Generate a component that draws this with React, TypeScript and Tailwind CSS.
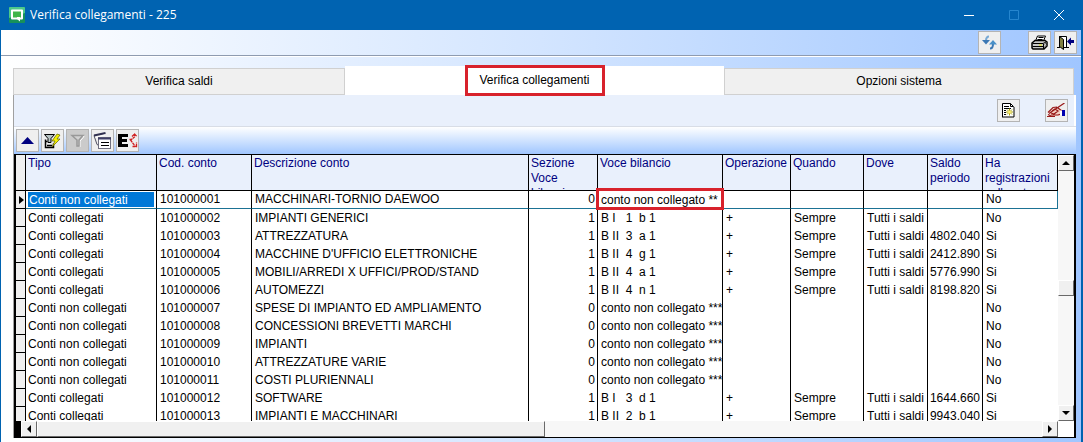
import type React from "react"

type Row = [string, string, string, number, string, string, string, string, string, string]

const LINKED = "Conti collegati"
const UNLINKED = "Conti non collegati"
const MISSING = "conto non collegato ***"

const rows: Row[] = [
  [UNLINKED, "101000001", "MACCHINARI-TORNIO DAEWOO", 0, "conto non collegato **", "", "", "", "", "No"],
  [LINKED, "101000002", "IMPIANTI GENERICI", 1, "B I   1  b 1", "+", "Sempre", "Tutti i saldi", "", "No"],
  [LINKED, "101000003", "ATTREZZATURA", 1, "B II  3  a 1", "+", "Sempre", "Tutti i saldi", "4802.040", "Si"],
  [LINKED, "101000004", "MACCHINE D'UFFICIO ELETTRONICHE", 1, "B II  4  g 1", "+", "Sempre", "Tutti i saldi", "2412.890", "Si"],
  [LINKED, "101000005", "MOBILI/ARREDI X UFFICI/PROD/STAND", 1, "B II  4  a 1", "+", "Sempre", "Tutti i saldi", "5776.990", "Si"],
  [LINKED, "101000006", "AUTOMEZZI", 1, "B II  4  n 1", "+", "Sempre", "Tutti i saldi", "8198.820", "Si"],
  [UNLINKED, "101000007", "SPESE DI IMPIANTO ED AMPLIAMENTO", 0, MISSING, "", "", "", "", "No"],
  [UNLINKED, "101000008", "CONCESSIONI BREVETTI MARCHI", 0, MISSING, "", "", "", "", "No"],
  [UNLINKED, "101000009", "IMPIANTI", 0, MISSING, "", "", "", "", "No"],
  [UNLINKED, "101000010", "ATTREZZATURE VARIE", 0, MISSING, "", "", "", "", "No"],
  [UNLINKED, "101000011", "COSTI PLURIENNALI", 0, MISSING, "", "", "", "", "No"],
  [LINKED, "101000012", "SOFTWARE", 1, "B I   3  d 1", "+", "Sempre", "Tutti i saldi", "1644.660", "Si"],
  [LINKED, "101000013", "IMPIANTI E MACCHINARI", 1, "B II  2  b 1", "+", "Sempre", "Tutti i saldi", "9943.040", "Si"],
]

const columns = [
  { label: "Tipo", width: "w-[131px]" },
  { label: "Cod. conto", width: "w-[95px]" },
  { label: "Descrizione conto", width: "" },
  { label: "Sezione Voce bilancio", width: "w-[69px]" },
  { label: "Voce bilancio", width: "w-[125px]" },
  { label: "Operazione", width: "w-[68px]" },
  { label: "Quando", width: "w-[73px]" },
  { label: "Dove", width: "w-[64px]" },
  { label: "Saldo periodo", width: "w-[55px]" },
  { label: "Ha registrazioni collegate", width: "w-[75px]" },
]

const ToolButton = ({
  label,
  className = "bg-[#efefef]",
  children,
}: { label: string; className?: string; children: React.ReactNode }) => (
  <button
    type="button"
    aria-label={label}
    className={`flex h-[23px] w-[23px] shrink-0 items-center justify-center border border-[#b4b4b4] ${className}`}
  >
    {children}
  </button>
)

const ScrollButton = ({ label, points }: { label: string; points: string }) => (
  <button
    type="button"
    aria-label={label}
    className="flex h-4 w-4 shrink-0 items-center justify-center border border-t-white border-l-white border-r-[#696969] border-b-[#696969] bg-[#f0f0f0]"
  >
    <svg width="8" height="8" viewBox="0 0 8 8">
      <polygon points={points} />
    </svg>
  </button>
)

const AppLogo = () => (
  <svg width="16" height="16" viewBox="0 0 16 16">
    <rect width="16" height="16" rx="1" fill="#17915a" />
    <path d="M0 1q0-1 1-1h14q1 0 1 1v5L0 11z" fill="#4cc98a" />
    <path d="M3 3.500h10v8H3z" fill="#3fb54a" stroke="#fff" strokeWidth="2" strokeLinejoin="round" />
    <path d="M8 10h3v4.500L8 12z" fill="#fff" />
  </svg>
)

const RefreshIcon = () => (
  <svg width="15" height="15" viewBox="0 0 15 15" fill="none" stroke="#4a86bd" strokeWidth="2">
    <path d="M7 1.500C4.500 1.500 4 3 4 6" stroke="#79a9d4" />
    <path d="M0 5h8L4 9.500z" fill="#3c78b4" stroke="none" />
    <path d="M8 13.500c2.500 0 3-1.500 3-4.500" stroke="#3c78b4" />
    <path d="M7 9.500h8L11 5z" fill="#4a90c8" stroke="none" />
  </svg>
)

const PrinterIcon = () => (
  <svg width="17" height="15" viewBox="0 0 17 15" stroke="#000">
    <path d="M4.500 6l2-5h8l-2 5z" fill="#fff" />
    <path d="M7.500 2.500h5M6.500 4.500h5" />
    <path d="M1 8l3-2.500h10l2 1.500v4l-3 3H2l-1-1z" fill="#c8c8c8" strokeWidth="1.500" />
    <path d="M1.500 8.500H12l4-2M12.500 9v5M1.500 11.500H12" fill="none" />
    <path d="M8 10h3" stroke="#e8e800" />
    <path d="M13.500 9.500l2-2M13.500 12l2-2" stroke="#707070" />
  </svg>
)

const ExitIcon = () => (
  <svg width="17" height="16" viewBox="0 0 17 16">
    <path d="M2.500 13V1.500h7V13" fill="#fff" stroke="#000" />
    <path d="M0 12.500h3M7 12.500h5" stroke="#000" />
    <path d="M2.500 1.500l4 3v10l-4-3z" fill="#808040" stroke="#000" />
    <path d="M10 6.500l4-4V5h3v3h-3v2.500z" fill="#000080" />
  </svg>
)

const ReportIcon = () => (
  <svg width="13" height="15" viewBox="0 0 13 15">
    <path d="M.5.5h8l3 3v10H.5z" fill="#fff" />
    <path d="M.5 14V.5h8l3 3M12 4v10M0 14h12" fill="none" stroke="#000" />
    <path d="M8.500.5v3h3M2 3.500h5M2 5.500h7M2 7.500h2M2 9.500h2M2 11.500h2" fill="none" stroke="#000" />
    <path d="M7.500 5.500v7M4 9h7M5 6.500l5 5M10 6.500l-5 5" stroke="#a8a000" />
    <circle cx="7.500" cy="9" r="1.500" fill="#fff070" />
  </svg>
)

const SignIcon = () => (
  <svg width="19" height="15" viewBox="0 0 19 15">
    <path d="M3 9l4-4 3-1 5 4v4l-4 1H5L2 11z" fill="#f3cfc2" />
    <path
      d="M17.500 0L10 5 2 10.500M10 4L6 4.500 1 9.500M5 8l3-2 3 2-4 3-3-1M11 5l4 3M4 12h7l3-1M0 13.500h8M1 11.500l3 1.500"
      fill="none"
      stroke="#981818"
      strokeWidth="1.200"
    />
    <path d="M13 7.500h2v5h-2z" fill="#fff" />
    <path d="M15 7h3v6h-3z" fill="#0000b0" />
  </svg>
)

const FilterRunIcon = () => (
  <svg width="17" height="16" viewBox="0 0 17 16">
    <path d="M.5 1.500h10L7 5.500v4H4v-4z" fill="#b8c4c4" stroke="#000" />
    <path d="M1.500 6.500v8h8v-4M1.500 8.500h2M3 12.500h5" fill="none" stroke="#000" strokeWidth="1.500" />
    <path d="M13 1L8 8h3l-3 6 8-8h-3l3-4z" fill="#f4f000" stroke="#606000" strokeWidth=".7" />
  </svg>
)

const FilterIcon = () => (
  <svg width="15" height="15" viewBox="0 0 15 15">
    <path d="M3 3.500h11L10 8v6" fill="none" stroke="#fff" />
    <path d="M2 2.500h11L9 7v6H7V7z" fill="#d2d2d2" stroke="#999" strokeWidth="1.500" />
  </svg>
)

const WindowsIcon = () => (
  <svg width="19" height="17" viewBox="0 0 19 17">
    <path d="M1 3.500l3 9 2 1" fill="none" stroke="#505060" />
    <path d="M1 3.500L12.500 1" stroke="#303050" strokeWidth="2" />
    <path d="M2.500 5.500L12 3" stroke="#fff" />
    <rect x="5.500" y="5.500" width="12" height="11" fill="#fff" stroke="#707080" />
    <path d="M5 6.500h13" stroke="#404068" strokeWidth="2" />
    <path d="M8 10.500h8M8 13.500h8" stroke="#000" />
  </svg>
)

const ExpandIcon = () => (
  <svg width="20" height="15" viewBox="0 0 20 15">
    <path d="M0 1h10v3H4v2h5v3H4v2h6v3H0z" fill="#000" />
    <path
      d="M11.500 6.500h2l3-2.500V1M14 3.500L16.500 1 19 3.500M12.500 7l3 4 2 3M14.500 13.500h4v-4"
      fill="none"
      stroke="#d02020"
      strokeWidth="1.300"
      strokeDasharray="3 .5"
    />
  </svg>
)

export default function App() {
  return (
    <div className="flex flex-col border-l border-r-2 border-[#0063b1] bg-linear-to-r from-white via-[#d3e5ff] via-50% to-[#a0c6ff] font-['Liberation_Sans',Arial,sans-serif] text-xs leading-[15px] text-black">
      <header className="flex h-[30px] items-center bg-[#0063b1] pl-2 text-white">
        <AppLogo />
        <h1 className="ml-[5px] flex-1 font-['Open_Sans',sans-serif] text-xs">Verifica collegamenti - 225</h1>
        <div className="flex">
          <button type="button" aria-label="Riduci a icona" className="flex h-[30px] w-[45px] items-center justify-center">
            <svg width="10" height="10" viewBox="0 0 10 10" stroke="#fff"><path d="M0 5.500h10" /></svg>
          </button>
          <button type="button" aria-label="Ingrandisci" disabled className="flex h-[30px] w-[45px] items-center justify-center">
            <svg width="10" height="10" viewBox="0 0 10 10" fill="none" stroke="#2586cf"><path d="M.5.5h9v9h-9z" /></svg>
          </button>
          <button type="button" aria-label="Chiudi" className="flex h-[30px] w-[45px] items-center justify-center">
            <svg width="10" height="10" viewBox="0 0 10 10" stroke="#fff"><path d="M0 0l10 10M10 0L0 10" /></svg>
          </button>
        </div>
      </header>

      <div className="flex h-[26px] items-center justify-end border-b border-[#8e9bb0] pr-1">
        <ToolButton label="Aggiorna"><RefreshIcon /></ToolButton>
        <div className="w-[27px]" />
        <ToolButton label="Stampa"><PrinterIcon /></ToolButton>
        <div className="w-[3px]" />
        <ToolButton label="Esci"><ExitIcon /></ToolButton>
      </div>

      <main className="border-t border-white pt-[9px] pr-[5px] pb-1 pl-3">
        <div role="tablist" className="flex items-end">
          <button role="tab" aria-selected="false" className="h-[27px] w-[332px] border border-[#d0d0d0] bg-[#f0f0f0]">
            Verifica saldi
          </button>
          <button role="tab" aria-selected="true" className="flex h-[29px] flex-1 items-center justify-center bg-white">
            <span className="flex h-[31px] w-[140px] shrink-0 items-center justify-center border-3 border-[#d8222c]">
              Verifica collegamenti
            </span>
          </button>
          <button role="tab" aria-selected="false" className="mr-[2px] h-[27px] w-[350px] border border-[#d0d0d0] bg-[#f0f0f0]">
            Opzioni sistema
          </button>
        </div>

        <section className="border-l border-[#a0a0a0]">
          <div className="flex h-[31px] items-center justify-end gap-[25px] border-r-2 border-white bg-[#e9f0fc] pr-[6px]">
            <ToolButton label="Report"><ReportIcon /></ToolButton>
            <ToolButton label="Firma"><SignIcon /></ToolButton>
          </div>
          <div className="flex h-7 items-center gap-[2px] border-t border-[#d8dde6] bg-linear-to-b from-white to-[#a0c6ff] pl-[2px]">
            <ToolButton label="Comprimi">
              <svg width="13" height="7" viewBox="0 0 13 7"><path d="M0 7l6.500-7L13 7z" fill="#000080" /></svg>
            </ToolButton>
            <ToolButton label="Applica filtro"><FilterRunIcon /></ToolButton>
            <ToolButton label="Filtro" className="bg-[#cbcbcb]"><FilterIcon /></ToolButton>
            <ToolButton label="Finestre"><WindowsIcon /></ToolButton>
            <ToolButton label="Espandi"><ExpandIcon /></ToolButton>
          </div>

          <div className="border border-x-2 border-black bg-white">
            <div className="flex h-[266px]">
              <div className="min-w-0 flex-1 overflow-hidden">
                <table className="w-full table-fixed border-separate border-spacing-0">
                  <thead>
                    <tr className="text-left text-[#000080]">
                      <th className="w-[10px] border-r border-b border-black bg-[#f0f0f0] p-0" />
                      {columns.map((c) => (
                        <th key={c.label} className={`${c.width} border-r border-b border-black bg-[#e9f0fc] p-0 align-top font-normal`}>
                          <div className="h-[35px] overflow-hidden pt-px pl-[2px]">{c.label}</div>
                        </th>
                      ))}
                    </tr>
                  </thead>
                  <tbody>
                    {rows.map((row, i) => (
                      <tr key={row[1]} className="h-[18px]">
                        <td className="border-r border-b border-black bg-[#f0f0f0] p-0">
                          {i === 0 && (
                            <svg className="ml-[3px]" width="5" height="8" viewBox="0 0 5 8"><path d="M0 0l5 4-5 4z" /></svg>
                          )}
                        </td>
                        {row.map((value, j) => (
                          <td
                            key={columns[j].label}
                            className={`h-[18px] p-0 ${i === 0 ? "border-b border-b-[#1b7294]" : ""} ${j < 9 ? "border-r border-r-black" : i === 0 ? "border-r border-r-[#1b7294]" : ""}`}
                          >
                            {i === 0 && j === 0 ? (
                              <div className="mx-px h-[17px] border border-white bg-[#0078d7] pl-px leading-[16px] text-white">{value}</div>
                            ) : i === 0 && j === 4 ? (
                              <div className="relative">
                                <div className="h-[17px] overflow-hidden pl-[3px] leading-[18px] whitespace-pre">{value}</div>
                                <div className="absolute -top-[3px] -right-[2px] -left-[2px] h-[22px] border-3 border-[#d8222c]" />
                              </div>
                            ) : (
                              <div
                                className={`h-[17px] overflow-hidden leading-[17px] whitespace-pre ${j === 3 || j === 8 ? "pr-[2px] text-right" : j === 0 ? "pl-[2px]" : "pl-[3px]"}`}
                              >
                                {value}
                              </div>
                            )}
                          </td>
                        ))}
                      </tr>
                    ))}
                  </tbody>
                </table>
              </div>
              <div className="flex w-4 flex-col bg-[#f7f7f7]">
                <ScrollButton label="Su" points="0,6 4,2 8,6" />
                <div className="h-[109px]" />
                <div className="h-4 border border-t-white border-l-white border-r-[#696969] border-b-[#696969] bg-[#f0f0f0]" />
                <div className="flex-1" />
                <ScrollButton label="Giù" points="0,2 8,2 4,6" />
              </div>
            </div>
            <div className="flex h-4 border-l-5 border-black pr-4">
              <ScrollButton label="Sinistra" points="6,0 6,8 2,4" />
              <div className="w-[49%] border border-t-white border-l-white border-r-[#696969] border-b-[#696969] bg-[#f0f0f0]" />
              <div className="flex-1 bg-[#f7f7f7]" />
              <ScrollButton label="Destra" points="2,0 6,4 2,8" />
            </div>
          </div>
        </section>
      </main>
    </div>
  )
}
